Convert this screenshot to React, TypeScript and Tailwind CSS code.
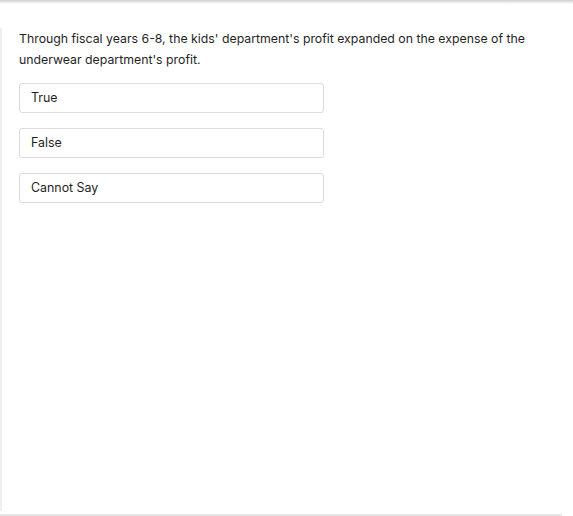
const options = ["True", "False", "Cannot Say"];

const App = () => {
  return (
    <div className="w-[573px] h-[516px] bg-white relative overflow-hidden font-['Inter','Noto_Sans',sans-serif] text-[#1f1f1f]">
      {/* top shadow */}
      <div className="h-[4px] w-full bg-gradient-to-b from-[#cfcfcf] to-white" />

      <div className="flex h-[510px]">
        {/* left rule */}
        <div className="w-[2px] mt-[24px] mb-[3px] bg-[#efefef]" />

        <div className="flex-1 pl-[17px] pt-[24px]">
          <p className="text-[12.3px] leading-[21px] w-[530px]">
            Through fiscal years 6-8, the kids' department's profit expanded on the
            expense of the underwear department's profit.
          </p>

          <div className="mt-[13px] flex flex-col gap-[15px]">
            {options.map((o) => (
              <div
                key={o}
                className="w-[305px] h-[30px] flex items-center px-[11px] border border-[#dcdcdc] rounded-[3px] text-[12.4px] bg-white"
              >
                {o}
              </div>
            ))}
          </div>
        </div>
      </div>

      {/* bottom rule */}
      <div className="w-[562px] h-[2px] bg-[#e6e6e6]" />
    </div>
  );
};

export default App;
